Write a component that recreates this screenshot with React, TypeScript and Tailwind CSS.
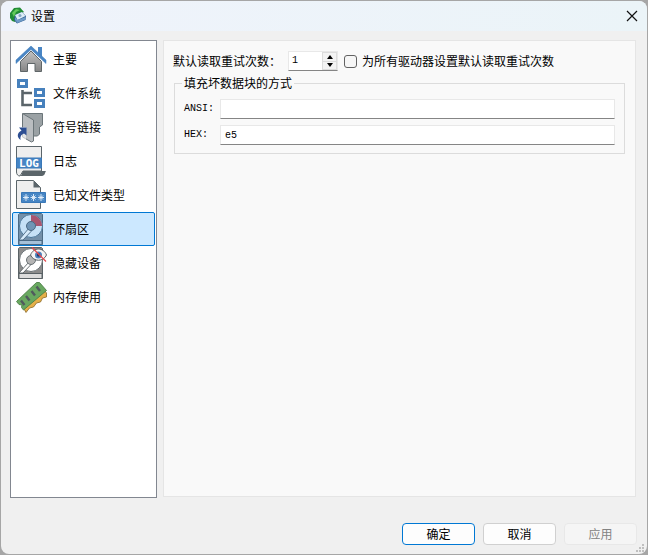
import { useState } from "react";
import type { ReactNode } from "react";
import clsx from "clsx";

// ── Icons ──────────────────────────────────────────────────────────────────────

function Icon({ children }: { children: ReactNode }) {
  return (
    <svg viewBox="0 0 32 32" className="size-8 shrink-0" aria-hidden="true">
      {children}
    </svg>
  );
}

function HomeIcon() {
  return (
    <Icon>
      <defs>
        <linearGradient id="wall" x1="0" y1="0" x2="0" y2="1">
          <stop offset="0" stopColor="#c2c2c2" />
          <stop offset="1" stopColor="#858585" />
        </linearGradient>
      </defs>
      <path d="M5.5 18.500 16 8l10.500 10.500v10H20V20.500h-7.500v8h-7z" fill="url(#wall)" stroke="#5f6668" />
      <path d="M23 4h4v12l-4-4z" fill="#4a86c5" />
      <path d="M16 3 1 17v3.500L16 6.500l15 14V17z" fill="#4a86c5" stroke="#3a78b8" strokeWidth=".5" />
    </Icon>
  );
}

function TreeIcon() {
  return (
    <Icon>
      <path d="M7.500 13v15H17M7.500 16H17" fill="none" stroke="#5b656a" strokeWidth="2.600" />
      <g fill="#fff" stroke="#4781bd" strokeWidth="3">
        <rect x="3.500" y="3.500" width="8" height="6" />
        <rect x="20.500" y="12.500" width="8" height="6" />
        <rect x="20.500" y="23.500" width="8" height="6" />
      </g>
    </Icon>
  );
}

function LinkIcon() {
  return (
    <Icon>
      <path d="M8 2.500h19.500V14L24.500 16v7l-2 2h-4z" fill="#9aa1a4" stroke="#6b7579" />
      <path d="M7.500 2.500 18.500 9v21l-2 1-9-5z" fill="#b9bdc0" stroke="#6b7579" />
      <path d="M2 16h9v13H2z" fill="#fff" opacity=".6" />
      <path d="M4 16.500h7.500v8L9 22.500c-3 1-4 3-3.500 6.500-4-3-3.500-7 1-9.500z" fill="#2d4f93" />
    </Icon>
  );
}

function LogIcon() {
  return (
    <Icon>
      <path d="M1.500 1.500h25V26H8l-3 5c-2 0-3.500-1.500-3.500-4z" fill="#eeeeee" stroke="#5b656a" />
      <path d="M8 26h23c-1 1-1 5-4 5H5c2 0 2-4 3-5z" fill="#5b656a" />
      <path d="M1.500 13h25v10h-25z" fill="#4685c4" stroke="#3a78b8" />
      <text x="14" y="22" textAnchor="middle" fill="#fff" fontSize="11" fontWeight="700" fontFamily="DejaVu Sans Mono, monospace">
        LOG
      </text>
    </Icon>
  );
}

function FileTypeIcon() {
  return (
    <Icon>
      <path d="M1.500 1.500h17l7 7v21h-24z" fill="#eeeeee" stroke="#5b656a" />
      <path d="M18.500 1.500v7h7z" fill="#5b656a" />
      <path d="M6.500 13.500h24v10h-24z" fill="#4685c4" stroke="#3a78b8" />
      <path
        d="M11 15v7M8 18.500h6M9 16.500l4 4M13 16.500l-4 4M18.500 15v7M15.500 18.500h6M16.500 16.500l4 4M20.500 16.500l-4 4M26 15v7M23 18.500h6M24 16.500l4 4M28 16.500l-4 4"
        stroke="#e8f1fa"
        strokeWidth=".9"
      />
    </Icon>
  );
}

function BadSectorIcon() {
  return (
    <Icon>
      <path d="M4.500.500h22l1 1v30h-24v-30z" fill="#7490a9" stroke="#4c6b85" />
      <path d="M4 27.500h23v4H4z" fill="#a5c1d9" stroke="#4c6b85" />
      <circle cx="16" cy="13" r="11.500" fill="#c6e1f6" stroke="#4b7698" />
      <path d="M16 13V2a11 11 0 0 1 11 11z" fill="#a9556f" />
      <path d="M14 15 4 27h4l8.500-9z" fill="#d7ebfa" stroke="#4b6a84" strokeWidth=".9" />
      <circle cx="16" cy="13" r="4.500" fill="#7095b5" stroke="#4b6a84" />
    </Icon>
  );
}

function HiddenDeviceIcon() {
  return (
    <Icon>
      <path d="M4.500.500h22l1 1v30h-24v-30z" fill="#8c8c8c" stroke="#5a6266" />
      <path d="M4 26.500h23v5H4z" fill="#dcdcdc" stroke="#5a6266" />
      <circle cx="16" cy="13" r="11.500" fill="#fff" stroke="#6a7276" />
      <path d="M14 15 4 26h4l8.500-9z" fill="#fff" stroke="#5a6266" strokeWidth=".9" />
      <circle cx="16" cy="13" r="4.500" fill="#b4b4b4" stroke="#6a7276" />
      <path d="M15.500 8c3-8 13-8 16 0-3 7-13 7-16 0z" fill="#f4f4f4" stroke="#5a6266" />
      <circle cx="23.500" cy="8" r="3.500" fill="#4e82bd" />
      <circle cx="23.500" cy="8" r="1.700" fill="#1f3f6d" />
      <path d="m17 .500 14 14" stroke="#e5484d" strokeWidth="1.300" />
    </Icon>
  );
}

function MemoryIcon() {
  return (
    <Icon>
      <path d="M11 31.500 8.500 27 29 9l2.500 3v4l-4 1-2 4-4 1-3 4-4 1z" fill="#e5b04a" stroke="#8c6a28" strokeWidth=".8" />
      <path d="m1.500 20.500 20-19h3l7 8L8.500 29l-2-2.500.500-2.500-3-.500z" fill="#69a860" stroke="#4c8046" strokeWidth=".9" />
      <path d="m6 19.500 3.500 4.500M11 15l3.500 4.500M16.500 10l3.500 4.500M21.500 5.500 25 10" stroke="#505a5e" strokeWidth="2.400" />
    </Icon>
  );
}

function AppLogo() {
  return (
    <svg viewBox="0 0 18 18" className="size-[18px]" aria-hidden="true">
      <path d="M1 6 5 1l6-.500L15 5l-4 2-5 8-3-1-2-3z" fill="#218c35" />
      <path d="m3 6 4-4 4 1-4 2-2 5z" fill="#62ca59" />
      <path d="m6 8 7-3 4 4-.500 4L8 16.500 5 13z" fill="#315f91" />
      <path d="m6 8 7-3 3.500 4-8 4z" fill="#dcecf7" />
      <path d="m6 10 2.500 3 8-3v2.500L8.500 16 6 13z" fill="#6e9bc8" />
      <circle cx="11" cy="8.500" r="1.500" fill="#86a8c5" />
    </svg>
  );
}

// ── Data ───────────────────────────────────────────────────────────────────────

const PAGES = [
  { label: "主要", icon: HomeIcon },
  { label: "文件系统", icon: TreeIcon },
  { label: "符号链接", icon: LinkIcon },
  { label: "日志", icon: LogIcon },
  { label: "已知文件类型", icon: FileTypeIcon },
  { label: "坏扇区", icon: BadSectorIcon },
  { label: "隐藏设备", icon: HiddenDeviceIcon },
  { label: "内存使用", icon: MemoryIcon },
];

const FIELD =
  "h-5 min-w-0 flex-1 border border-[#e8e8e8] border-b-[#858585] bg-white px-1 font-['Liberation_Mono','Noto_Sans_CJK_SC',monospace] text-[10px] outline-none";

const BUTTON = "h-[22px] w-[73px] rounded-[4px] border text-xs leading-5";

// ── Component ──────────────────────────────────────────────────────────────────

export default function App() {
  const [page, setPage] = useState("坏扇区");
  const [retries, setRetries] = useState(1);
  const [ansi, setAnsi] = useState("");
  const [hex, setHex] = useState("e5");
  const [allDrives, setAllDrives] = useState(false);

  return (
    <div className="flex min-h-screen bg-[#a6a6a6] p-px font-['Noto_Sans_CJK_SC',sans-serif] text-xs text-black">
      <div className="relative flex min-w-0 flex-1 flex-col overflow-hidden rounded-lg bg-[#f0f0f0]">
        {/* Title bar */}
        <header className="flex h-[30px] items-center bg-linear-to-r from-[#eff3fb] to-[#ebf4f8] pr-[7px] pl-2">
          <AppLogo />
          <h1 className="ml-1 flex-1">设置</h1>
          <button type="button" aria-label="关闭" className="flex size-4 items-center justify-center">
            <svg viewBox="0 0 12 12" className="size-3" aria-hidden="true">
              <path d="m1 1 10 10M11 1 1 11" stroke="#111" strokeWidth="1.200" />
            </svg>
          </button>
        </header>

        <div className="flex flex-1 gap-1.5 pt-[9px] pr-[11px] pl-[9px]">
          {/* Page list */}
          <nav className="w-[147px] shrink-0 border border-[#828790] bg-white p-px">
            {PAGES.map(({ label, icon: PageIcon }) => (
              <button
                key={label}
                type="button"
                onClick={() => setPage(label)}
                aria-current={label === page ? "page" : undefined}
                className={clsx(
                  "flex h-[34px] w-full items-center gap-1.5 rounded-[2px] border pl-0.5 text-left",
                  label === page ? "border-[#0078d4] bg-[#cce8ff]" : "border-transparent"
                )}
              >
                <PageIcon />
                {label}
              </button>
            ))}
          </nav>

          {/* Settings panel */}
          <main className="mb-px min-w-0 flex-1 border border-[#e5e5e5] bg-[#f9f9f9] px-[9px] pt-2.5">
            <div className="flex items-center">
              <label htmlFor="retries" className="w-[115px] shrink-0">
                默认读取重试次数：
              </label>
              <div className="flex h-5 w-[50px] shrink-0 border border-[#e8e8e8] border-b-[#858585] bg-white">
                <input
                  id="retries"
                  type="number"
                  min={0}
                  value={retries}
                  onChange={(e) => setRetries(Number(e.target.value))}
                  className="min-w-0 flex-1 [appearance:textfield] pl-[3px] font-['Liberation_Mono',monospace] text-[10px] outline-none [&::-webkit-inner-spin-button]:appearance-none"
                />
                <div className="flex w-[15px] flex-col border border-[#dcdcdc] bg-[#f3f3f3]">
                  <button
                    type="button"
                    aria-label="增加"
                    onClick={() => setRetries(retries + 1)}
                    className="flex flex-1 items-center justify-center border-b border-[#dcdcdc]"
                  >
                    <svg viewBox="0 0 6 4" className="h-1 w-1.5" aria-hidden="true">
                      <path d="M0 4 3 0l3 4z" />
                    </svg>
                  </button>
                  <button
                    type="button"
                    aria-label="减少"
                    onClick={() => setRetries(Math.max(0, retries - 1))}
                    className="flex flex-1 items-center justify-center"
                  >
                    <svg viewBox="0 0 6 4" className="h-1 w-1.5" aria-hidden="true">
                      <path d="m0 0 3 4 3-4z" />
                    </svg>
                  </button>
                </div>
              </div>
              <label className="ml-1.5 flex items-center gap-[5px] whitespace-nowrap">
                <input
                  type="checkbox"
                  checked={allDrives}
                  onChange={(e) => setAllDrives(e.target.checked)}
                  className="size-[13px] appearance-none rounded-[3px] border border-[#626262] bg-[#f6f6f6] checked:bg-[#0078d4]"
                />
                为所有驱动器设置默认读取重试次数
              </label>
            </div>

            <fieldset className="mt-1 mr-px ml-px border border-[#dcdcdc] px-[9px] pb-2">
              <legend className="-ml-0.5 px-0.5 leading-4">填充坏数据块的方式</legend>
              <div className="flex flex-col gap-1.5 pt-2">
                {[
                  { id: "ansi", label: "ANSI:", value: ansi, onChange: setAnsi },
                  { id: "hex", label: "HEX:", value: hex, onChange: setHex },
                ].map((field) => (
                  <div key={field.id} className="flex items-center">
                    <label
                      htmlFor={field.id}
                      className="w-9 shrink-0 font-['Liberation_Mono',monospace] text-[10px]"
                    >
                      {field.label}
                    </label>
                    <input
                      id={field.id}
                      type="text"
                      value={field.value}
                      onChange={(e) => field.onChange(e.target.value)}
                      className={FIELD}
                    />
                  </div>
                ))}
              </div>
            </fieldset>
          </main>
        </div>

        {/* Dialog buttons */}
        <footer className="flex justify-end gap-2 pt-[25px] pr-[10px] pb-[9px]">
          <button type="button" className={clsx(BUTTON, "border-[#0078d4] bg-[#fdfdfd]")}>
            确定
          </button>
          <button type="button" className={clsx(BUTTON, "border-[#d0d0d0] bg-[#fdfdfd]")}>
            取消
          </button>
          <button type="button" disabled className={clsx(BUTTON, "border-[#e8e8e8] bg-[#f5f5f5] text-[#838383]")}>
            应用
          </button>
        </footer>

        {/* Resize grip */}
        <svg viewBox="0 0 8 8" className="absolute right-[3px] bottom-0.5 size-2" aria-hidden="true">
          <path d="M6 0h2v2H6zM3 3h2v2H3zM6 3h2v2H6zM0 6h2v2H0zM3 6h2v2H3zM6 6h2v2H6z" fill="#bfbfbf" />
        </svg>
      </div>
    </div>
  );
}
